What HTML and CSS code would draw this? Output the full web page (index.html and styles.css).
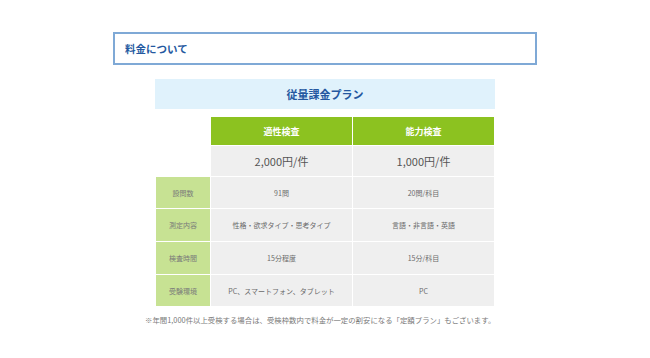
FILE: index.html
```html
<!DOCTYPE html>
<html lang="ja">
<head>
<meta charset="utf-8">
<link rel="stylesheet" href="styles.css">
</head>
<body>
<div class="page">
  <div class="section-title">料金について</div>
  <div class="plan">
    <div class="plan-title">従量課金プラン</div>
    <div class="grid">
      <div class="blank"></div>
      <div class="head">適性検査</div>
      <div class="head">能力検査</div>
      <div class="blank"></div>
      <div class="price">2,000円/件</div>
      <div class="price">1,000円/件</div>
      <div class="label">設問数</div>
      <div class="cell">91問</div>
      <div class="cell">20問/科目</div>
      <div class="label">測定内容</div>
      <div class="cell">性格・欲求タイプ・思考タイプ</div>
      <div class="cell">言語・非言語・英語</div>
      <div class="label">検査時間</div>
      <div class="cell">15分程度</div>
      <div class="cell">15分/科目</div>
      <div class="label">受験環境</div>
      <div class="cell">PC、スマートフォン、タブレット</div>
      <div class="cell">PC</div>
    </div>
    <p class="note">※年間1,000件以上受検する場合は、受検枠数内で料金が一定の割安になる「定額プラン」もございます。</p>
  </div>
</div>
</body>
</html>
```
FILE: styles.css
```css
html, body {
  margin: 0;
  padding: 0;
  background: #ffffff;
}
body {
  font-family: "Noto Sans CJK JP", "Noto Sans", sans-serif;
}
.page {
  width: 650px;
  padding-top: 32px;
  display: flex;
  flex-direction: column;
  align-items: center;
}
.section-title {
  box-sizing: border-box;
  width: 424px;
  height: 33px;
  border: 2px solid #7fa9d6;
  padding-left: 10px;
  display: flex;
  align-items: center;
  font-size: 10.5px;
  font-weight: bold;
  color: #2458a0;
}
.plan {
  width: 340px;
  margin-top: 14px;
}
.plan-title {
  height: 30px;
  background: #e0f2fc;
  display: flex;
  align-items: center;
  justify-content: center;
  font-size: 11px;
  font-weight: bold;
  color: #2458a0;
}
.grid {
  margin-top: 8px;
  margin-left: 1px;
  display: grid;
  grid-template-columns: 54px 141px 141px;
  grid-template-rows: 28px 30px 31px 32px 32px 31px;
  gap: 1px;
}
.grid > div {
  display: flex;
  align-items: center;
  justify-content: center;
}
.blank {
  background: #ffffff;
}
.head {
  background: #8cc220;
  color: #ffffff;
  font-size: 9px;
  font-weight: bold;
}
.price {
  background: #efefef;
  color: #555555;
  font-size: 11px;
}
.label {
  background: #c7e293;
  color: #7a7a7a;
  font-size: 7px;
}
.cell {
  background: #efefef;
  color: #6a6a6a;
  font-size: 7px;
}
.note {
  margin: 8px 0 0 -10px;
  width: 360px;
  font-size: 7.4px;
  color: #7a7a7a;
  white-space: nowrap;
}
```
